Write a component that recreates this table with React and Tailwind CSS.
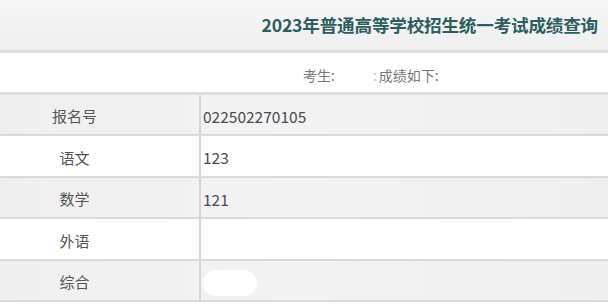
import React from 'react';

const rows = [
    { label: '报名号', value: '022502270105', gray: true, h: 'h-[41px]' },
    { label: '语文', value: '123', gray: false, h: 'h-[42px]' },
    { label: '数学', value: '121', gray: true, h: 'h-[41px]' },
    { label: '外语', value: '', gray: false, h: 'h-[42px]' },
    { label: '综合', value: null, gray: true, h: 'h-[41px]' },
];

const App = () => {
    return (
        <div
            className="w-[608px] h-[308px] overflow-hidden bg-white"
            style={{ fontFamily: '"Noto Sans CJK SC", "Microsoft YaHei", sans-serif' }}
        >
            {/* title bar */}
            <div className="h-[53px] bg-gradient-to-b from-[#f6f6f6] to-[#efefef] flex items-center justify-end pr-[10px] border-b-[3px] border-[#dcdcdc]">
                <h1 className="text-[17.6px] font-bold text-[#2c5d5f] tracking-[-0.2px]">2023年普通高等学校招生统一考试成绩查询</h1>
            </div>

            {/* candidate line */}
            <div className="h-[42px] flex items-center pl-[303px] pt-[5px] border-b-[3px] border-[#dcdcdc] text-[14px] text-[#777]">
                <span>考生:</span>
                <span className="w-[38px]" />
                <span className="text-[#c8c8c8]">:</span>
                <span className="ml-[2px]">成绩如下:</span>
            </div>

            {/* score table */}
            {rows.map((r) => (
                <div
                    key={r.label}
                    className={`${r.h} flex border-b-2 border-[#dadada] ${r.gray ? 'bg-gradient-to-r from-[#efefef] via-[#f3f3f3] to-[#efefef]' : 'bg-white'}`}
                >
                    <div className="w-[201px] border-r-2 border-[#d6d6d6] flex items-center pt-[4px]">
                        <span className="w-[149px] text-center text-[15px] text-[#555]">{r.label}</span>
                    </div>
                    <div className="flex-1 flex items-center pl-[2px] pt-[4px] text-[15.5px] text-[#4a4a55]">
                        {r.value === null ? (
                            <span className="w-[54px] h-[26px] rounded-full bg-white" />
                        ) : (
                            r.value
                        )}
                    </div>
                </div>
            ))}
        </div>
    );
};

export default App;
